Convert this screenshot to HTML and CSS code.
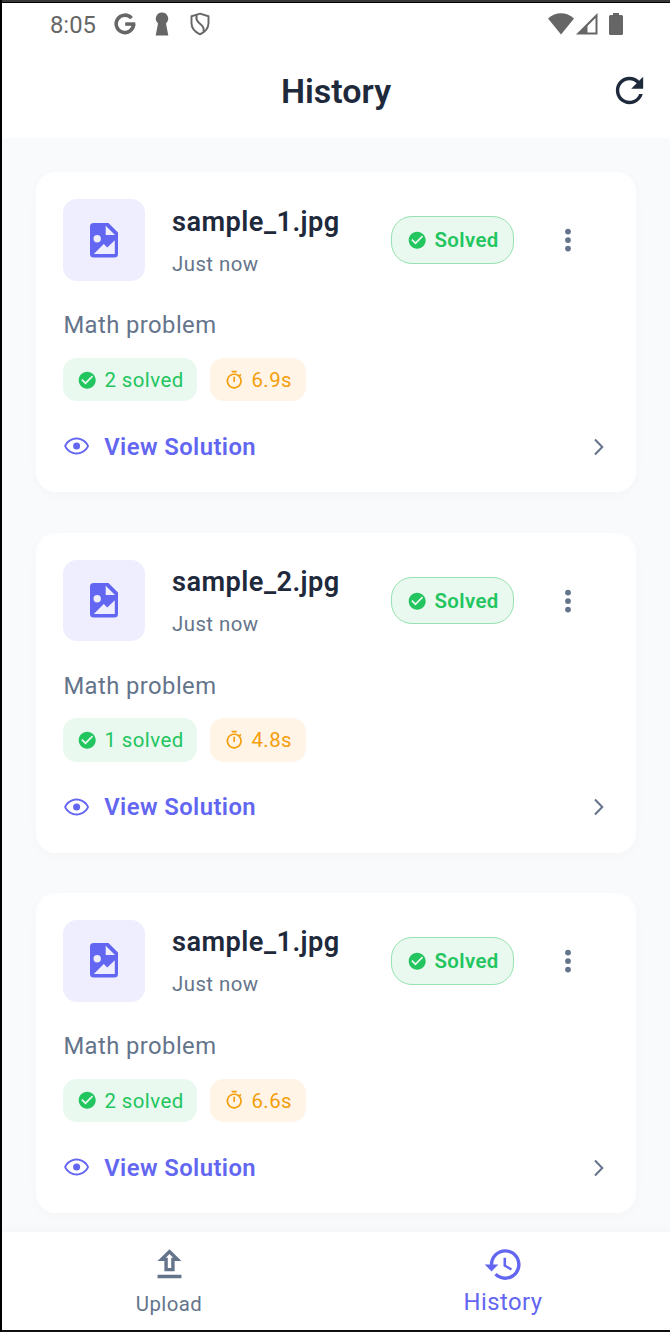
FILE: index.html
```
<!DOCTYPE html>
<html lang="en">
<head>
<meta charset="utf-8">
<title>History</title>
<link rel="stylesheet" href="styles.css">
</head>
<body>
<svg class="defs" width="0" height="0">
  <defs>
    <symbol id="check" viewBox="0 0 24 24"><path d="M12 2C6.48 2 2 6.48 2 12s4.48 10 10 10 10-4.48 10-10S17.52 2 12 2zm-2 15l-5-5 1.41-1.41L10 14.17l7.59-7.59L19 8l-9 9z"/></symbol>
    <symbol id="timer" viewBox="0 0 24 24"><path d="M15 1H9v2h6V1zm-4 13h2V8h-2v6zm8.03-6.61l1.42-1.42c-.43-.51-.9-.99-1.41-1.41l-1.42 1.42C16.07 4.74 14.12 4 12 4c-4.97 0-9 4.03-9 9s4.02 9 9 9 9-4.03 9-9c0-2.12-.74-4.07-1.97-5.61zM12 20c-3.87 0-7-3.13-7-7s3.13-7 7-7 7 3.13 7 7-3.13 7-7 7z"/></symbol>
    <symbol id="eye" viewBox="0 0 24 24"><path d="M12 5.7c3.9 0 7.4 2.2 9.2 5.8-1.8 3.6-5.3 5.8-9.2 5.8s-7.4-2.2-9.2-5.8C4.6 7.9 8.1 5.7 12 5.7M12 4C7 4 2.73 7.11 1 11.5 2.73 15.89 7 19 12 19s9.27-3.11 11-7.5C21.27 7.11 17 4 12 4z"/><circle cx="12" cy="11.5" r="3.1"/></symbol>
    <symbol id="file" viewBox="0 0 28 35"><path fill-rule="evenodd" d="M3.5 0H18.5L28 9.5V31a3.5 3.5 0 0 1-3.5 3.5h-21A3.5 3.5 0 0 1 0 31V3.5A3.5 3.5 0 0 1 3.5 0zM15.7 2.7V12H25zM7.2 12a3.7 3.7 0 1 0 0 7.4 3.7 3.7 0 0 0 0-7.4zM3.8 31H24.8V17.3L17.3 24.5 13.8 21z"/></symbol>
    <symbol id="dots" viewBox="0 0 8 24"><circle cx="4" cy="3.6" r="2.9"/><circle cx="4" cy="12.1" r="2.9"/><circle cx="4" cy="20.6" r="2.9"/></symbol>
    <symbol id="chevron" viewBox="0 0 10 18"><path d="M1 1.5L8.3 9 1 16.5" fill="none" stroke="currentColor" stroke-width="2"/></symbol>
  </defs>
</svg>
<div class="screen">
  <header class="top">
    <div class="status">
      <span class="clock">8:05</span>
      <svg class="google" viewBox="0 0 22 22"><path d="M17.500 5.200A8.700 8.700 0 1 0 19.600 11.200" fill="none" stroke="currentColor" stroke-width="3.600"/><path d="M11.200 9.300H21.300V12.800H11.200z"/></svg>
      <svg class="keyhole" viewBox="0 0 14 24"><path d="M7 .5a6.200 6.200 0 0 1 4 10.900L13.300 23.500H.7L3 11.400A6.200 6.200 0 0 1 7 .5z"/></svg>
      <svg class="shield" viewBox="0 0 20 24"><path d="M10 1.700L18.500 4.300V11c0 5-3.500 9-8.500 11.300C5 20 1.500 16 1.500 11V4.300z" fill="none" stroke="currentColor" stroke-width="1.900"/><path d="M6.800 3C5.500 7 7 9.500 10 11.800S14.500 16 13.500 19.500" fill="none" stroke="currentColor" stroke-width="2"/></svg>
      <span class="spacer"></span>
      <svg class="wifi" viewBox="0 0 26 22"><path d="M0 5.600C7.500-1.500 18.500-1.500 26 5.600L13 21.500z"/></svg>
      <svg class="signal" viewBox="0 0 22 22"><path fill-rule="evenodd" d="M0 21.500L21.500 0V21.500zM11.500 13V19.500H19.500V5z"/></svg>
      <svg class="battery" viewBox="0 0 14 22"><path d="M4 0h6v2h2.500A1.500 1.500 0 0 1 14 3.500v17a1.500 1.500 0 0 1-1.500 1.500h-11A1.500 1.500 0 0 1 0 20.500v-17A1.500 1.500 0 0 1 1.500 2H4z"/></svg>
    </div>
    <div class="appbar">
      <h1 class="title">History</h1>
      <svg class="refresh" viewBox="0 0 24 24"><path d="M17.650 6.350C16.200 4.900 14.210 4 12 4c-4.420 0-7.990 3.580-7.990 8s3.570 8 7.990 8c3.730 0 6.840-2.550 7.730-6h-2.080c-.82 2.330-3.040 4-5.650 4-3.310 0-6-2.690-6-6s2.690-6 6-6c1.660 0 3.140.69 4.220 1.780L13 11h7V4l-2.350 2.350z"/></svg>
    </div>
  </header>
  <main class="list">
    <article class="card">
      <div class="head">
        <div class="thumb"><svg><use href="#file"/></svg></div>
        <div class="meta"><div class="name">sample_1.jpg</div><div class="time">Just now</div></div>
        <div class="badge"><svg class="small"><use href="#check"/></svg><span>Solved</span></div>
        <svg class="dots"><use href="#dots"/></svg>
      </div>
      <div class="kind">Math problem</div>
      <div class="chips">
        <div class="chip green"><svg class="small"><use href="#check"/></svg><span>2 solved</span></div>
        <div class="chip orange"><svg class="small"><use href="#timer"/></svg><span>6.9s</span></div>
      </div>
      <div class="view"><svg class="eye"><use href="#eye"/></svg><span>View Solution</span><svg class="chevron"><use href="#chevron"/></svg></div>
    </article>
    <article class="card">
      <div class="head">
        <div class="thumb"><svg><use href="#file"/></svg></div>
        <div class="meta"><div class="name">sample_2.jpg</div><div class="time">Just now</div></div>
        <div class="badge"><svg class="small"><use href="#check"/></svg><span>Solved</span></div>
        <svg class="dots"><use href="#dots"/></svg>
      </div>
      <div class="kind">Math problem</div>
      <div class="chips">
        <div class="chip green"><svg class="small"><use href="#check"/></svg><span>1 solved</span></div>
        <div class="chip orange"><svg class="small"><use href="#timer"/></svg><span>4.8s</span></div>
      </div>
      <div class="view"><svg class="eye"><use href="#eye"/></svg><span>View Solution</span><svg class="chevron"><use href="#chevron"/></svg></div>
    </article>
    <article class="card">
      <div class="head">
        <div class="thumb"><svg><use href="#file"/></svg></div>
        <div class="meta"><div class="name">sample_1.jpg</div><div class="time">Just now</div></div>
        <div class="badge"><svg class="small"><use href="#check"/></svg><span>Solved</span></div>
        <svg class="dots"><use href="#dots"/></svg>
      </div>
      <div class="kind">Math problem</div>
      <div class="chips">
        <div class="chip green"><svg class="small"><use href="#check"/></svg><span>2 solved</span></div>
        <div class="chip orange"><svg class="small"><use href="#timer"/></svg><span>6.6s</span></div>
      </div>
      <div class="view"><svg class="eye"><use href="#eye"/></svg><span>View Solution</span><svg class="chevron"><use href="#chevron"/></svg></div>
    </article>
  </main>
  <nav class="tabs">
    <div class="tab">
      <svg viewBox="0 0 24 24"><path d="M9 16h6v-6h4l-7-7-7 7h4v6zm3-10.170L14.170 8H13v6h-2V8H9.830L12 5.830zM5 18h14v2H5z"/></svg>
      <span>Upload</span>
    </div>
    <div class="tab active">
      <svg viewBox="0 0 24 24"><path d="M13 3c-4.970 0-9 4.030-9 9H1l3.890 3.890.07.14L9 12H6c0-3.870 3.130-7 7-7s7 3.130 7 7-3.130 7-7 7c-1.930 0-3.680-.79-4.940-2.060l-1.420 1.420C8.270 19.990 10.510 21 13 21c4.970 0 9-4.030 9-9s-4.030-9-9-9zm-1 5v5l4.280 2.540.72-1.210-3.500-2.080V8H12z"/></svg>
      <span>History</span>
    </div>
  </nav>
</div>
</body>
</html>
```
FILE: styles.css
```
* { box-sizing: border-box; }
body { margin: 0; font-family: Roboto, sans-serif; color: #1e293b; }
svg { display: block; fill: currentColor; flex: none; }
span, .name, .time, .kind { white-space: nowrap; }
.defs { position: absolute; }
.screen { width: 670px; height: 1332px; border-left: 2px solid #000; border-bottom: 2px solid #111; background: #f8fafc; display: flex; flex-direction: column; overflow: hidden; }
.top { height: 138px; flex: none; background: #fff; border-top: 2px solid #383838; box-shadow: inset 0 1px #000; }
.status { height: 44px; padding: 0 47px 0 48px; display: flex; align-items: center; color: #666; }
.clock { font-size: 23.8px; line-height: 28px; padding-top: 1px; }
.spacer { flex: 1; }
.google { width: 22px; height: 22px; margin-left: 18px; }
.keyhole { width: 14px; height: 24px; margin-left: 19px; }
.shield { width: 20px; height: 24px; margin-left: 21px; }
.wifi { width: 26px; height: 22px; margin-right: 2px; margin-top: -1px; }
.signal { width: 22px; height: 22px; margin-right: 11px; }
.battery { width: 14px; height: 22px; margin-top: -1px; }
.appbar { height: 90px; display: grid; grid-template-columns: 1fr auto 1fr; align-items: center; padding: 0 20px 1px; }
.title { grid-column: 2; margin: 0; padding-top: 1px; font-size: 34px; line-height: 40px; font-weight: 600; }
.refresh { width: 41px; height: 41px; justify-self: end; }
.list { flex: 1; min-height: 0; padding: 34.2px 34px 0; display: flex; flex-direction: column; gap: 40.4px; }
.card { flex: none; height: 320px; padding: 27px; border-radius: 20px; background: #fff; box-shadow: 0 3px 12px rgba(15, 23, 42, .024); }
.head { height: 82px; display: flex; align-items: center; }
.thumb { width: 82px; height: 81.6px; border-radius: 14px; background: #efeefe; color: #6366f1; display: flex; align-items: center; justify-content: center; }
.thumb svg { width: 28px; height: 35px; }
.meta { width: 219px; margin-left: 27px; }
.name { padding-top: 1px; font-size: 27.2px; line-height: 39px; font-weight: 600; letter-spacing: .45px; }
.time { margin-top: 7px; font-size: 20.4px; line-height: 30px; letter-spacing: .45px; color: #64748b; }
.badge { width: 122.5px; height: 47.5px; border: 1px solid #96e2b2; border-radius: 21px; background: #e9f9ef; color: #22c55e; display: flex; align-items: center; padding-left: 15px; font-size: 20.4px; font-weight: 600; letter-spacing: .42px; }
.small { width: 20.4px; height: 20.4px; margin-right: 7px; }
.badge .small { margin-top: 1px; }
.dots { width: 8px; height: 24px; margin-left: 50.5px; color: #64748b; }
.kind { margin-top: 27px; padding-left: .4px; font-size: 23.8px; line-height: 34px; letter-spacing: .43px; color: #64748b; }
.chips { margin-top: 15.8px; display: flex; gap: 13px; }
.chip { height: 43.5px; border-radius: 14px; display: flex; align-items: center; padding-left: 14px; font-size: 20.4px; letter-spacing: .45px; }
.green { width: 134px; background: #e9f9ef; color: #22c55e; }
.orange { width: 95.5px; background: #fff4e6; color: #f59e0b; }
.view { margin-top: 28.3px; height: 34px; display: flex; align-items: center; padding-right: 5px; color: #6366f1; font-size: 23.8px; font-weight: 600; letter-spacing: .43px; }
.eye { width: 27.2px; height: 27.2px; margin-right: 14px; }
.chevron { width: 10px; height: 18px; margin-left: auto; color: #64748b; }
.tabs { height: 98px; flex: none; background: #fff; box-shadow: 0 -3px 12px rgba(15, 23, 42, .024); display: grid; grid-template-columns: 1fr 1fr; }
.tab { display: flex; flex-direction: column; align-items: center; padding-top: 12px; color: #64748b; font-size: 20.4px; line-height: 28px; letter-spacing: .45px; }
.tab svg { width: 41px; height: 41px; }
.tab span { margin-top: 5px; }
.active { color: #6366f1; font-size: 23.8px; }
.active span { margin-top: 3px; }
```
